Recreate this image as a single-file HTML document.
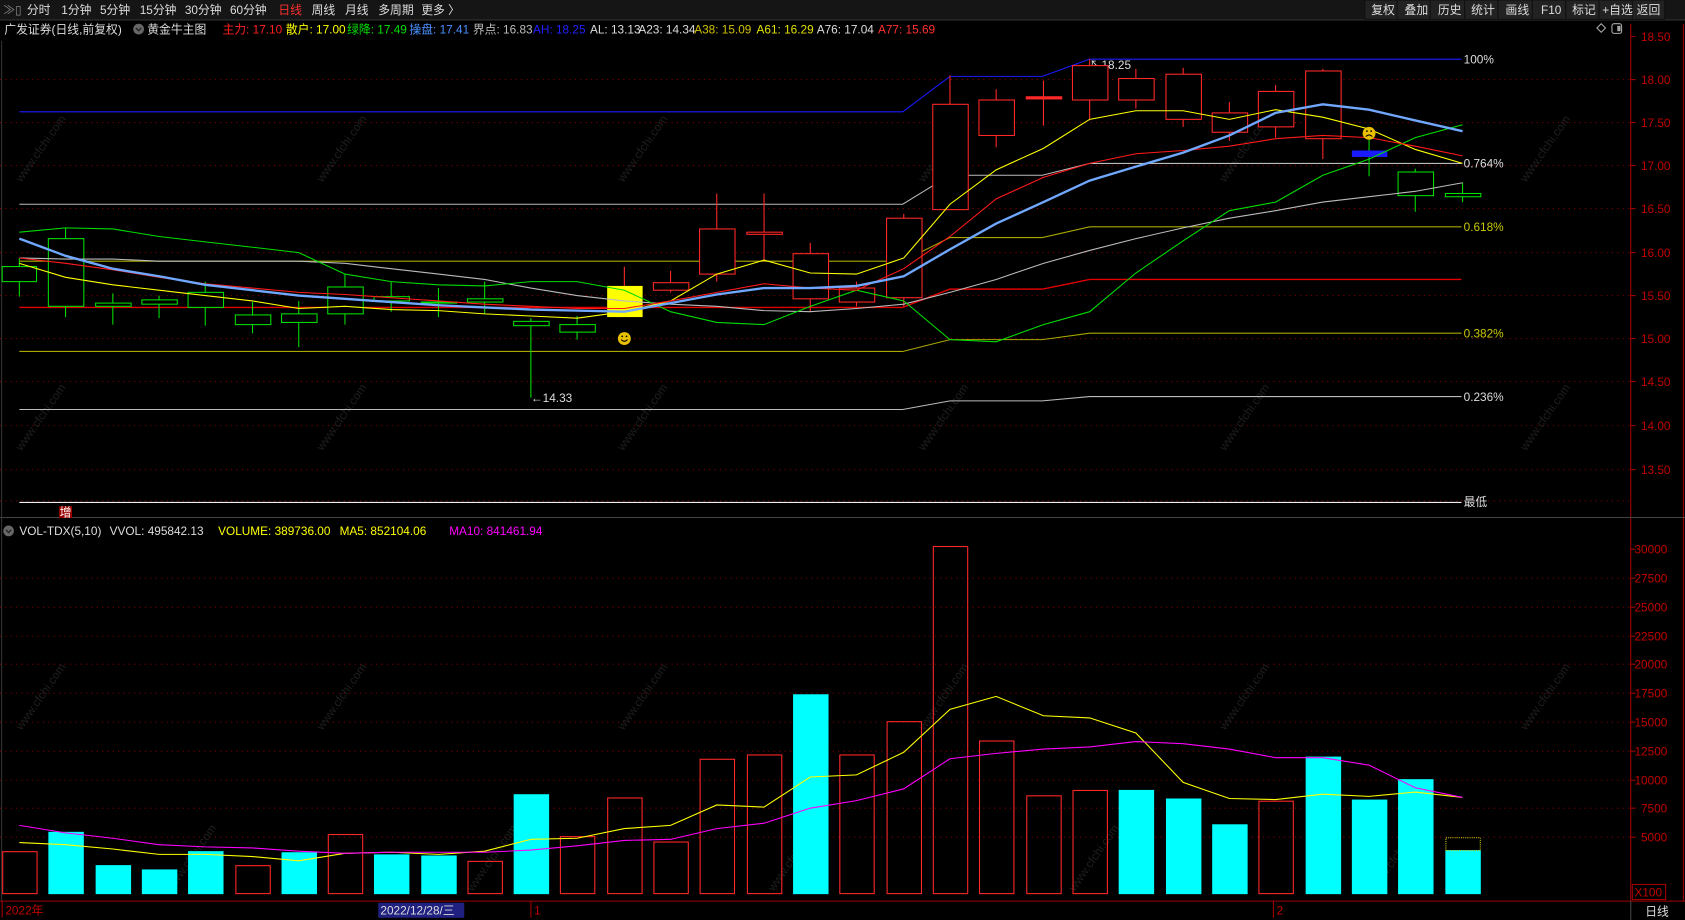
<!DOCTYPE html>
<html><head><meta charset="utf-8"><style>
html,body{margin:0;padding:0;background:#000;overflow:hidden}
svg{display:block}
text{font-family:"Liberation Sans","Noto Sans CJK SC",sans-serif;font-size:11px}
</style></head><body>
<svg width="1685" height="920" viewBox="0 0 1568 856" xmlns="http://www.w3.org/2000/svg">
<rect width="1568" height="856" fill="#000"/>
<!-- toolbar -->
<rect x="0" y="0" width="1568" height="18" fill="#151515"/>
<line x1="0" y1="18.5" x2="1568" y2="18.5" stroke="#333"/>
<text x="3" y="13" fill="#888" font-size="10">≫▯</text>
<g fill="#ddd" font-size="11.5">
<text x="25" y="13" font-size="11.5">分时</text><text x="57" y="13" font-size="11.5">1分钟</text><text x="93" y="13" font-size="11.5">5分钟</text><text x="130" y="13" font-size="11.5">15分钟</text><text x="172" y="13" font-size="11.5">30分钟</text><text x="214" y="13" font-size="11.5">60分钟</text>
<text x="259" y="13" fill="#ff3030" font-size="11.5">日线</text><text x="290" y="13" font-size="11.5">周线</text><text x="321" y="13" font-size="11.5">月线</text><text x="352" y="13" font-size="11.5">多周期</text><text x="392" y="13" font-size="11.5">更多 〉</text>
</g>
<g fill="#222" stroke="#111">
<rect x="1270" y="0" width="30" height="18"/><rect x="1300" y="0" width="31" height="18"/><rect x="1331" y="0" width="32" height="18"/><rect x="1363" y="0" width="31" height="18"/><rect x="1394" y="0" width="32" height="18"/><rect x="1426" y="0" width="31" height="18"/><rect x="1457" y="0" width="31" height="18"/><rect x="1488" y="0" width="31" height="18"/><rect x="1519" y="0" width="30" height="18"/>
</g>
<g fill="#ddd">
<text x="1276" y="13" font-size="11.5">复权</text><text x="1307" y="13" font-size="11.5">叠加</text><text x="1338" y="13" font-size="11.5">历史</text><text x="1369" y="13" font-size="11.5">统计</text><text x="1401" y="13" font-size="11.5">画线</text><text x="1434" y="13" font-size="11.5">F10</text><text x="1463" y="13" font-size="11.5">标记</text><text x="1491" y="13" font-size="11.5">+自选</text><text x="1523" y="13" font-size="11.5">返回</text>
</g>
<!-- row 2 -->
<text x="4" y="31" fill="#ddd">广发证券(日线,前复权)</text>
<circle cx="129" cy="27" r="5" fill="#666"/><path d="M126.5 26 L129 28.5 L131.5 26" stroke="#222" stroke-width="1.2" fill="none"/>
<text x="137" y="31" fill="#ddd">黄金牛主图</text>
<text x="207" y="31" fill="#ff2020">主力: 17.10</text>
<text x="266" y="31" fill="#ffff00">散户: 17.00</text>
<text x="323" y="31" fill="#00e000">绿降: 17.49</text>
<text x="381" y="31" fill="#4a90ff">操盘: 17.41</text>
<text x="440" y="31" fill="#bbb">界点: 16.83</text>
<text x="496" y="31" fill="#2020ff">AH: 18.25</text>
<text x="549" y="31" fill="#ddd">AL: 13.13</text>
<text x="594" y="31" fill="#ddd">A23: 14.34</text>
<text x="646" y="31" fill="#d0c000">A38: 15.09</text>
<text x="704" y="31" fill="#e0e000">A61: 16.29</text>
<text x="760" y="31" fill="#ddd">A76: 17.04</text>
<text x="817" y="31" fill="#ff3030">A77: 15.69</text>
<path d="M1490 22 L1494 26 L1490 30 L1486 26 Z" stroke="#aaa" fill="none"/>
<rect x="1500" y="22" width="9" height="9" rx="2" stroke="#aaa" fill="none"/><rect x="1505" y="24" width="3" height="5" fill="#aaa"/>
<!-- right axis -->
<line x1="1517.5" y1="22" x2="1517.5" y2="838" stroke="#a00000"/>
<line x1="1566.5" y1="22" x2="1566.5" y2="838" stroke="#a00000"/>
<line x1="0" y1="481.5" x2="1568" y2="481.5" stroke="#444"/>
<line x1="0" y1="838.5" x2="1568" y2="838.5" stroke="#a00000"/>
<line x1="1.5" y1="38" x2="1.5" y2="838" stroke="#333"/>
<g fill="#c00000">
<text x="1527" y="38">18.50</text><text x="1527" y="78">18.00</text><text x="1527" y="118">17.50</text><text x="1527" y="158">17.00</text><text x="1527" y="198">16.50</text><text x="1527" y="239">16.00</text><text x="1527" y="279">15.50</text><text x="1527" y="319">15.00</text><text x="1527" y="359">14.50</text><text x="1527" y="400">14.00</text><text x="1527" y="441">13.50</text>
<text x="1521" y="515">30000</text><text x="1521" y="542">27500</text><text x="1521" y="569">25000</text><text x="1521" y="596">22500</text><text x="1521" y="622">20000</text><text x="1521" y="649">17500</text><text x="1521" y="676">15000</text><text x="1521" y="703">12500</text><text x="1521" y="730">10000</text><text x="1527" y="756">7500</text><text x="1527" y="783">5000</text>
</g>
<g stroke="#a00000">
<path d="M1517 34h5M1517 74h5M1517 114h5M1517 154h5M1517 194h5M1517 235h5M1517 275h5M1517 315h5M1517 355h5M1517 396h5M1517 437h5M1517 511h5M1517 538h5M1517 565h5M1517 592h5M1517 618h5M1517 645h5M1517 672h5M1517 699h5M1517 726h5M1517 752h5M1517 779h5"/>
</g>
<rect x="1519" y="823" width="31" height="14" fill="none" stroke="#a00000"/>
<text x="1521" y="834" fill="#c00000">X100</text>
<!-- grid -->
<g stroke="#800000" stroke-dasharray="1,4">
<path d="M0 74H1517M0 114H1517M0 154H1517M0 194H1517M0 235H1517M0 275H1517M0 315H1517M0 355H1517M0 396H1517M0 437H1517M0 466H1517"/>
<path d="M0 538H1517M0 565H1517M0 592H1517M0 618H1517M0 645H1517M0 672H1517M0 699H1517M0 726H1517M0 752H1517M0 779H1517"/>
</g>
<!-- watermarks -->
<g fill="#1f1f1f" font-size="22">
<text transform="translate(20,170) rotate(-55)">www.cfchi.com</text>
<text transform="translate(300,170) rotate(-55)">www.cfchi.com</text>
<text transform="translate(580,170) rotate(-55)">www.cfchi.com</text>
<text transform="translate(860,170) rotate(-55)">www.cfchi.com</text>
<text transform="translate(1140,170) rotate(-55)">www.cfchi.com</text>
<text transform="translate(1420,170) rotate(-55)">www.cfchi.com</text>
<text transform="translate(20,420) rotate(-55)">www.cfchi.com</text>
<text transform="translate(300,420) rotate(-55)">www.cfchi.com</text>
<text transform="translate(580,420) rotate(-55)">www.cfchi.com</text>
<text transform="translate(860,420) rotate(-55)">www.cfchi.com</text>
<text transform="translate(1140,420) rotate(-55)">www.cfchi.com</text>
<text transform="translate(1420,420) rotate(-55)">www.cfchi.com</text>
<text transform="translate(20,680) rotate(-55)">www.cfchi.com</text>
<text transform="translate(300,680) rotate(-55)">www.cfchi.com</text>
<text transform="translate(580,680) rotate(-55)">www.cfchi.com</text>
<text transform="translate(860,680) rotate(-55)">www.cfchi.com</text>
<text transform="translate(1140,680) rotate(-55)">www.cfchi.com</text>
<text transform="translate(1420,680) rotate(-55)">www.cfchi.com</text>
<text transform="translate(160,830) rotate(-55)">www.cfchi.com</text>
<text transform="translate(440,830) rotate(-55)">www.cfchi.com</text>
<text transform="translate(720,830) rotate(-55)">www.cfchi.com</text>
<text transform="translate(1000,830) rotate(-55)">www.cfchi.com</text>
<text transform="translate(1280,830) rotate(-55)">www.cfchi.com</text>
</g>
<!-- level lines -->
<g fill="none" stroke-width="1">
<polyline stroke="#1a1aff" points="18,104 840,104 884,71 970,71 1014,55 1360,55"/>
<polyline stroke="#bbb" points="18,190 840,190 884,163 970,163 1014,152 1360,152"/>
<polyline stroke="#a8a800" points="18,243 840,243 884,221 970,221 1014,211 1360,211"/>
<polyline stroke="#e00000" stroke-width="1.3" points="18,286 840,286 884,269 970,269 1014,260 1360,260"/>
<polyline stroke="#a8a800" points="18,327 840,327 884,316 970,316 1014,310 1360,310"/>
<polyline stroke="#bbb" points="18,381 840,381 884,373 970,373 1014,369 1360,369"/>
<line x1="18" y1="467.5" x2="1360" y2="467.5" stroke="#eee"/>
</g>
<g fill="#ddd">
<text x="1362" y="59">100%</text><text x="1362" y="156">0.764%</text>
<text x="1362" y="215" fill="#c8c800">0.618%</text><text x="1362" y="314" fill="#c8c800">0.382%</text>
<text x="1362" y="373">0.236%</text><text x="1362" y="471">最低</text>
<text x="1014" y="64">↖18.25</text><text x="494" y="374">←14.33</text>
</g>
<rect x="55" y="471" width="12" height="11" fill="#900"/><text x="55.5" y="480.5" fill="#fff" font-size="10">增</text>
<!-- candles -->
<g stroke="#00dd00" fill="none" stroke-width="1">
<path d="M18 240V276M61 212V295M105 273V302M148 275V296M191 262V303M235 281V310M278 280V323M321 255V302M364 262V290M408 268V295M451 262V292M494 296V370M537 294V316M1274 130V164M1317 157V197M1361 170V188"/>
<g fill="#000">
<rect x="2" y="248" width="32" height="14"/><rect x="45" y="222" width="33" height="63"/><rect x="89" y="282" width="33" height="3"/><rect x="132" y="279" width="33" height="4"/><rect x="175" y="272" width="33" height="14"/><rect x="219" y="293" width="33" height="9"/><rect x="262" y="292" width="33" height="8"/><rect x="305" y="267" width="33" height="25"/><rect x="348" y="276" width="33" height="4"/><rect x="392" y="281" width="33" height="1"/><rect x="435" y="278" width="33" height="3"/><rect x="478" y="299" width="33" height="4"/><rect x="521" y="302" width="33" height="7"/><rect x="1301" y="160" width="33" height="22"/><rect x="1345" y="180" width="33" height="3"/>
</g>
</g>
<g stroke="#ff2828" fill="none" stroke-width="1">
<path d="M581 248V266M624 252V272M667 180V262M711 180V243M754 226V290M797 262V285M841 199V285M884 70V195M927 83V137M971 75V117M1014 55V112M1057 64V101M1101 63V118M1144 95V131M1187 79V128M1231 64V148"/>
<g fill="#000">
<rect x="608" y="263" width="33" height="7"/><rect x="651" y="213" width="33" height="42"/><rect x="695" y="216" width="33" height="2"/><rect x="738" y="236" width="33" height="42"/><rect x="781" y="268" width="33" height="13"/><rect x="825" y="203" width="33" height="74"/><rect x="868" y="97" width="33" height="98"/><rect x="911" y="93" width="33" height="33"/><rect x="955" y="90" width="33" height="2" fill="#ff2828"/><rect x="998" y="61" width="33" height="32"/><rect x="1041" y="73" width="33" height="20"/><rect x="1085" y="69" width="33" height="42"/><rect x="1128" y="105" width="33" height="18"/><rect x="1171" y="85" width="33" height="33"/><rect x="1215" y="66" width="33" height="63"/>
</g>
</g>
<rect x="565" y="266" width="33" height="29" fill="#ffff00"/>
<rect x="1258" y="140" width="33" height="6" fill="#1a1aff"/>
<circle cx="581" cy="315" r="6" fill="#e8c000"/><path d="M578 316 Q581 319 584 316" stroke="#000" fill="none"/><circle cx="579" cy="313" r="0.8"/><circle cx="583" cy="313" r="0.8"/>
<!-- MAs -->
<g fill="none" stroke-width="1">
<polyline stroke="#bbb" points="18,240 61,241 105,241 148,243 191,243 235,243 278,243 321,245 364,250 408,255 451,260 494,268 537,275 581,280 624,283 667,285 711,289 754,290 797,287 841,283 884,272 927,260 971,245 1014,233 1057,222 1101,212 1144,203 1187,196 1231,188 1274,183 1317,178 1361,170"/>
<polyline stroke="#00dd00" points="18,216 61,212 105,213 148,220 191,225 235,230 278,235 321,255 364,262 408,265 451,266 494,262 537,262 581,270 624,290 667,300 711,302 754,285 797,270 841,280 884,316 927,318 971,302 1014,290 1057,254 1101,224 1144,196 1187,188 1231,163 1274,148 1317,128 1361,116"/>
<polyline stroke="#ffff00" points="18,245 61,258 105,265 148,270 191,275 235,280 278,287 321,285 364,288 408,289 451,292 494,294 537,296 581,290 624,280 667,255 711,242 754,254 797,255 841,240 884,190 927,158 971,138 1014,111 1057,103 1101,103 1144,111 1187,102 1231,109 1274,120 1317,139 1361,152"/>
<polyline stroke="#ff1a1a" points="18,240 61,245 105,251 148,258 191,264 235,268 278,272 321,274 364,277 408,280 451,283 494,285 537,287 581,287 624,280 667,272 711,264 754,268 797,270 841,250 884,220 927,185 971,165 1014,152 1057,143 1101,140 1144,136 1187,129 1231,126 1274,128 1317,136 1361,145"/>
<polyline stroke="#70a8ff" stroke-width="2.2" points="18,222 61,238 105,250 148,257 191,265 235,270 278,275 321,278 364,281 408,284 451,286 494,288 537,289 581,290 624,282 667,274 711,268 754,268 797,266 841,257 884,232 927,208 971,188 1014,168 1057,155 1101,142 1144,126 1187,105 1231,97 1274,102 1317,112 1361,122"/>
</g>
<circle cx="1274" cy="124" r="6" fill="#e8c000"/><path d="M1271 127 Q1274 124 1277 127" stroke="#000" fill="none"/><circle cx="1272" cy="122" r="0.8"/><circle cx="1276" cy="122" r="0.8"/>
<!-- volume header -->
<circle cx="8" cy="494" r="5" fill="#666"/><path d="M5.5 493 L8 495.5 L10.5 493" stroke="#222" stroke-width="1.2" fill="none"/>
<text x="18" y="498" fill="#ddd">VOL-TDX(5,10)</text>
<text x="102" y="498" fill="#ddd">VVOL: 495842.13</text>
<text x="203" y="498" fill="#ffff00">VOLUME: 389736.00</text>
<text x="316" y="498" fill="#ffff00">MA5: 852104.06</text>
<text x="418" y="498" fill="#ff00ff">MA10: 841461.94</text>
<!-- volume bars -->
<g fill="#00ffff">
<rect x="45" y="774" width="33" height="58"/><rect x="89" y="805" width="33" height="27"/><rect x="132" y="809" width="33" height="23"/><rect x="175" y="792" width="33" height="40"/><rect x="262" y="793" width="33" height="39"/><rect x="348" y="795" width="33" height="37"/><rect x="392" y="796" width="33" height="36"/><rect x="478" y="739" width="33" height="93"/><rect x="738" y="646" width="33" height="186"/><rect x="1041" y="735" width="33" height="97"/><rect x="1085" y="743" width="33" height="89"/><rect x="1128" y="767" width="33" height="65"/><rect x="1215" y="704" width="33" height="128"/><rect x="1258" y="744" width="33" height="88"/><rect x="1301" y="725" width="33" height="107"/><rect x="1345" y="791" width="33" height="41"/>
</g>
<g fill="none" stroke="#ff2828">
<rect x="2.5" y="792.5" width="32" height="39"/><rect x="219.5" y="805.5" width="32" height="26"/><rect x="305.5" y="776.5" width="32" height="55"/><rect x="435.5" y="801.5" width="32" height="30"/><rect x="521.5" y="778.5" width="32" height="53"/><rect x="565.5" y="742.5" width="32" height="89"/><rect x="608.5" y="783.5" width="32" height="48"/><rect x="651.5" y="706.5" width="32" height="125"/><rect x="695.5" y="702.5" width="32" height="129"/><rect x="781.5" y="702.5" width="32" height="129"/><rect x="825.5" y="671.5" width="32" height="160"/><rect x="868.5" y="508.5" width="32" height="323"/><rect x="911.5" y="689.5" width="32" height="142"/><rect x="955.5" y="740.5" width="32" height="91"/><rect x="998.5" y="735.5" width="32" height="96"/><rect x="1171.5" y="745.5" width="32" height="86"/>
</g>
<rect x="1345.5" y="779.5" width="32" height="12" fill="none" stroke="#cccc00" stroke-dasharray="1,1"/>
<polyline fill="none" stroke="#ffff00" points="18,784 61,786 105,790 148,795 191,795 235,797 278,801 321,794 364,793 408,795 451,792 494,781 537,780 581,771 624,768 667,749 711,751 754,723 797,721 841,700 884,660 927,648 971,666 1014,668 1057,682 1101,728 1144,743 1187,744 1231,739 1274,741 1317,737 1361,742"/>
<polyline fill="none" stroke="#ff00ff" points="18,768 61,775 105,780 148,786 191,788 235,789 278,792 321,794 364,793 408,793 451,793 494,791 537,787 581,782 624,781 667,771 711,766 754,752 797,745 841,734 884,706 927,701 971,697 1014,695 1057,690 1101,692 1144,697 1187,705 1231,705 1274,712 1317,733 1361,742"/>
<!-- bottom axis -->
<g stroke="#a00000"><path d="M2 839V854M494 839V854M1185 839V854"/></g>
<text x="5" y="851" fill="#c00000">2022年</text>
<rect x="352" y="840" width="80" height="14" fill="#202080"/>
<text x="354" y="851" fill="#ddd">2022/12/28/三</text>
<text x="497" y="851" fill="#c00000">1</text>
<text x="1188" y="851" fill="#c00000">2</text>
<line x1="1517.5" y1="838" x2="1517.5" y2="856" stroke="#444"/>
<text x="1531" y="852" fill="#ddd">日线</text>
</svg>
</body></html>
